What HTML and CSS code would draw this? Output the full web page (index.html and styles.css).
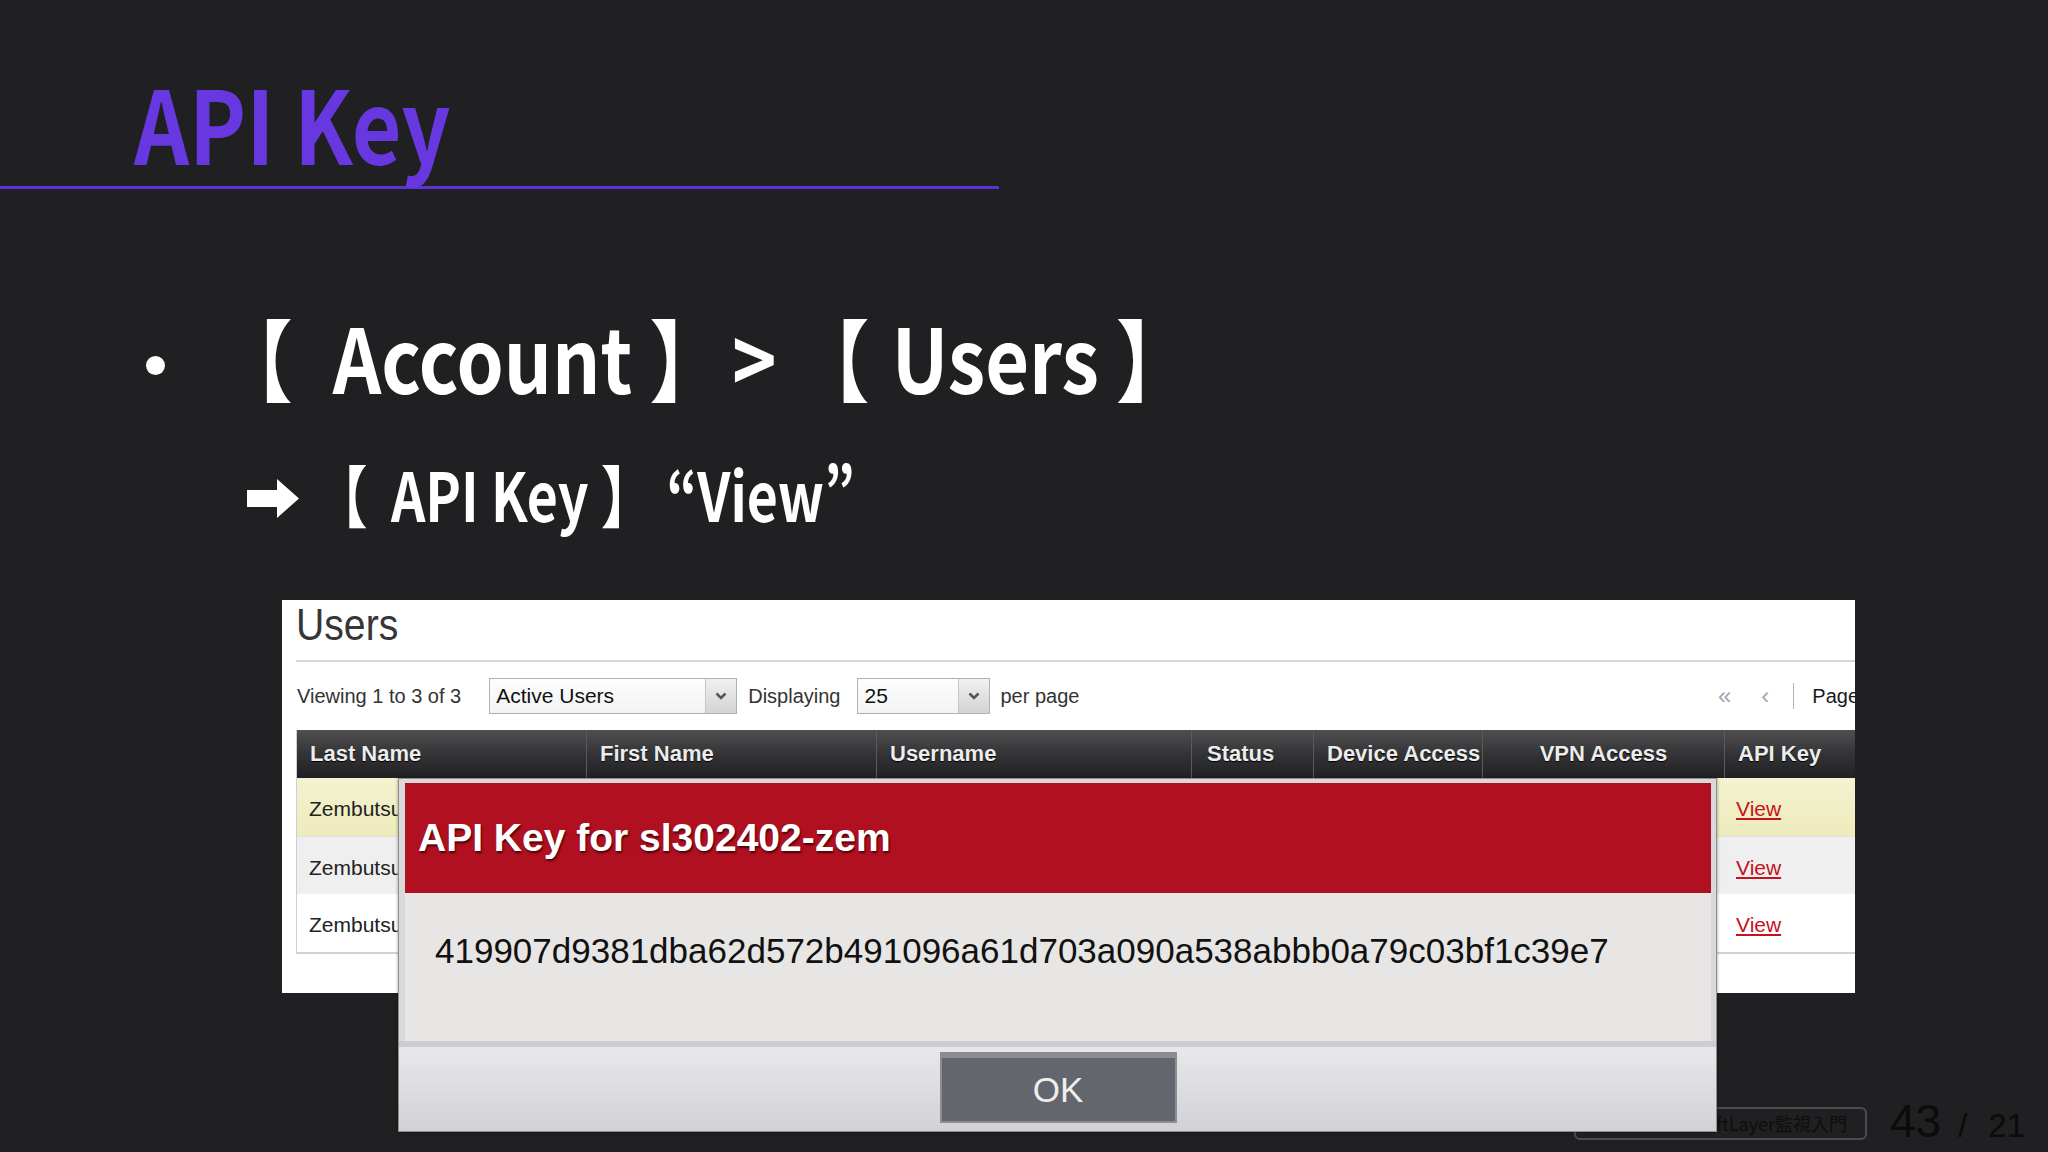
FILE: index.html
```html
<!DOCTYPE html>
<html lang="ja">
<head>
    <meta charset="UTF-8">
    <title>API Key</title>
    <link rel="stylesheet" href="styles.css">
</head>
<body>
    <div class="slide">
        <header class="slide-head">
            <h1 class="slide-title"><span class="title-text">API Key</span></h1>
        </header>

        <ul class="points">
            <li class="point point-main">
                <span class="dot"></span>
                <span class="point-text main-text">【 <i class="sp sp-lg"></i>Account 】<i class="sp sp-sm"></i>&gt; 【 <i class="sp sp-xs"></i>Users 】</span>
            </li>
            <li class="point point-sub">
                <svg class="arrow" width="53" height="39" viewBox="0 0 53 39">
                    <path d="M0 11 H30 V0 L52 19.5 L30 39 V28 H0 Z" fill="#fff"/>
                </svg>
                <span class="point-text sub-text">【 <i class="sp sp-md"></i>API Key 】 “View”</span>
            </li>
        </ul>

        <!-- portal screenshot -->
        <div class="shot">
            <div class="shot-title"><span class="users-heading">Users</span></div>

            <div class="toolbar">
                <span class="label">Viewing 1 to 3 of 3</span>
                <div class="select select-filter">
                    <span class="select-value">Active Users</span>
                    <span class="select-btn">
                        <svg width="12" height="8" viewBox="0 0 12 8"><polyline points="1.5,1.5 6,6 10.5,1.5" fill="none" stroke="#555" stroke-width="2.6"/></svg>
                    </span>
                </div>
                <span class="label label-display">Displaying</span>
                <div class="select select-count">
                    <span class="select-value">25</span>
                    <span class="select-btn">
                        <svg width="12" height="8" viewBox="0 0 12 8"><polyline points="1.5,1.5 6,6 10.5,1.5" fill="none" stroke="#555" stroke-width="2.6"/></svg>
                    </span>
                </div>
                <span class="label label-per">per page</span>

                <div class="pager">
                    <span class="pager-arrow">«</span>
                    <span class="pager-arrow pager-prev">‹</span>
                    <span class="pager-sep"></span>
                    <span class="label pager-label">Page 1 of 1</span>
                </div>
            </div>

            <div class="users">
                <div class="row row-head">
                    <div class="cell">Last Name</div>
                    <div class="cell">First Name</div>
                    <div class="cell">Username</div>
                    <div class="cell cell-status">Status</div>
                    <div class="cell">Device Access</div>
                    <div class="cell cell-center">VPN Access</div>
                    <div class="cell">API Key</div>
                </div>
                <div class="row row-hover">
                    <div class="cell">Zembutsu</div>
                    <div class="cell"></div>
                    <div class="cell"></div>
                    <div class="cell"></div>
                    <div class="cell"></div>
                    <div class="cell"></div>
                    <div class="cell"><a class="view-link" href="#">View</a></div>
                </div>
                <div class="row row-alt">
                    <div class="cell">Zembutsu</div>
                    <div class="cell"></div>
                    <div class="cell"></div>
                    <div class="cell"></div>
                    <div class="cell"></div>
                    <div class="cell"></div>
                    <div class="cell"><a class="view-link" href="#">View</a></div>
                </div>
                <div class="row">
                    <div class="cell">Zembutsu</div>
                    <div class="cell"></div>
                    <div class="cell"></div>
                    <div class="cell"></div>
                    <div class="cell"></div>
                    <div class="cell"></div>
                    <div class="cell"><a class="view-link" href="#">View</a></div>
                </div>
            </div>
        </div>

        <!-- API key dialog -->
        <div class="modal">
            <div class="modal-head">
                <h2 class="modal-title">API Key for sl302402-zem</h2>
            </div>
            <div class="modal-body">
                <p class="api-key">419907d9381dba62d572b491096a61d703a090a538abbb0a79c03bf1c39e7</p>
            </div>
            <div class="modal-foot">
                <button class="ok-btn">OK</button>
            </div>
        </div>

        <footer class="slide-foot">
            <span class="deck-name">はじめてのSoftLayer監視入門</span>
            <span class="page-num">
                <span class="page-cur">43</span>
                <span class="page-sep">/</span>
                <span class="page-total">21</span>
            </span>
        </footer>
    </div>
</body>
</html>
```

FILE: styles.css
```css
* {
    box-sizing: border-box;
}

body {
    margin: 0;
    background: #201f21;
    font-family: "Noto Sans CJK JP", "Noto Sans", sans-serif;
    color: #fff;
}

.slide {
    width: 2048px;
    height: 1152px;
    position: relative;
    overflow: hidden;
}

/* 标题 */
.slide-head {
    width: 999px;
    height: 189px;
    border-bottom: 3px solid #5b35d3;
    padding-left: 134px;
    display: flex;
    align-items: flex-end;
}

.slide-title {
    margin: 0 0 14px;
    font-size: 101px;
    line-height: 1;
    font-weight: 700;
    color: #6737df;
}

.title-text {
    display: inline-block;
    transform: scaleX(.85);
    transform-origin: left center;
}

/* 要点 */
.points {
    list-style: none;
    margin: 122px 0 0;
    padding: 0;
}

.point {
    display: flex;
    line-height: 1;
    font-weight: 700;
}

.point-text {
    display: inline-block;
    white-space: pre;
    transform-origin: left center;
    transform: scaleX(.85);
}

.sub-text {
    transform: scaleX(.8);
}

.sp {
    display: inline-block;
}

.sp-lg {
    width: 27px;
}

.sp-sm {
    width: 8px;
}

.sp-xs {
    width: 6px;
}

.sp-md {
    width: 14px;
}

.point-main {
    font-size: 89px;
    height: 89px;
    padding-left: 146px;
}

.dot {
    width: 19px;
    height: 19px;
    border-radius: 50%;
    background: #fff;
    margin-top: 45px;
    margin-right: 52px;
    flex: none;
}

.point-sub {
    font-size: 67px;
    height: 67px;
    margin-top: 59px;
    padding-left: 247px;
}

.arrow {
    flex: none;
    margin-top: 20px;
    margin-right: 14px;
}

/* 截图 */
.shot {
    margin: 74px 0 0 282px;
    width: 1573px;
    height: 393px;
    background: #fff;
    overflow: hidden;
    padding-left: 14px;
    font-family: "Liberation Sans", Arial, sans-serif;
    color: #333;
}

.shot-title {
    height: 62px;
    padding-top: 3px;
    border-bottom: 2px solid #d6d6d6;
    font-size: 44px;
    line-height: 1;
}

.users-heading {
    display: inline-block;
    transform: scaleX(.89);
    transform-origin: left center;
    color: #363636;
}

.toolbar {
    width: 1622px;
    height: 68px;
    display: flex;
    align-items: center;
    font-size: 20px;
}

.label {
    color: #333;
    white-space: nowrap;
    padding-left: 1px;
}

.select {
    height: 36px;
    display: flex;
    border: 1px solid #afb1b4;
    background: linear-gradient(#fdfdfd, #f3f3f3);
}

.select-filter {
    width: 248px;
    margin-left: 28px;
}

.select-count {
    width: 133px;
    margin-left: 17px;
}

.select-value {
    flex: 1;
    padding-left: 6px;
    line-height: 34px;
    color: #111;
    font-size: 21px;
}

.select-btn {
    width: 31px;
    border-left: 1px solid #c6c6c6;
    background: linear-gradient(#f1f1f1, #d3d3d3);
    display: flex;
    align-items: center;
    justify-content: center;
}

.label-display {
    margin-left: 10px;
}

.label-per {
    margin-left: 9px;
}

.pager {
    margin-left: auto;
    width: 200px;
    display: flex;
    align-items: center;
}

.pager-arrow {
    color: #a3a4b3;
    font-size: 24px;
}

.pager-prev {
    margin-left: 30px;
}

.pager-sep {
    width: 1px;
    height: 26px;
    background: #b5b5b5;
    margin-left: 24px;
}

.pager-label {
    margin-left: 17px;
    color: #1a1a1a;
}

/* 表格 */
.users {
    width: max-content;
    border-left: 1px solid #cfcfcf;
    border-bottom: 2px solid #d2d2d2;
}

.row {
    display: grid;
    grid-template-columns: 289px 290px 315px 122px 169px 242px 180px;
    height: 58px;
    font-size: 21px;
    color: #222;
}

.row .cell {
    padding: 4px 0 0 12px;
    line-height: 54px;
    white-space: nowrap;
    overflow: hidden;
}

.row-head {
    height: 48px;
    background: linear-gradient(#4f4f51, #343436 50%, #202022);
    font-size: 22px;
    font-weight: 700;
    color: #ececec;
}

.row-head .cell {
    padding: 0 0 0 13px;
    line-height: 48px;
    text-shadow: 0 1px 1px #000;
}

.row-head .cell + .cell {
    border-left: 1px solid #5a5a5c;
}

.row-head .cell-status {
    padding-left: 15px;
}

.row-head .cell-center {
    padding-left: 0;
    text-align: center;
}

.row-hover {
    background: linear-gradient(#f4f2d0, #eeebbb);
}

.row-alt {
    background: #efefef;
    border-top: 1px solid #e2e2e2;
}

.view-link {
    color: #c4121f;
    text-decoration: underline;
}

/* 弹窗 */
.modal {
    position: absolute;
    left: 398px;
    top: 778px;
    width: 1319px;
    height: 354px;
    border: 1px solid #8f8f8f;
    background: #d9d9db;
    padding: 4px 5px 0 6px;
    display: flex;
    flex-direction: column;
    z-index: 2;
    font-family: "Liberation Sans", Arial, sans-serif;
    box-shadow: 0 0 3px rgba(0, 0, 0, 0.4);
}

.modal-head {
    height: 110px;
    background: #b01020;
    padding-left: 13px;
}

.modal-title {
    margin: 0;
    font-size: 39px;
    line-height: 110px;
    font-weight: 700;
    color: #fff;
    text-shadow: 1px 2px 2px rgba(50, 0, 0, 0.8);
}

.modal-body {
    height: 148px;
    background: #e7e6e4;
    padding: 40px 0 0 30px;
}

.api-key {
    margin: 0;
    font-size: 35px;
    line-height: 1;
    color: #111;
}

.modal-foot {
    flex: 1;
    border-top: 6px solid #cdccd0;
    background: linear-gradient(#e8e7ea, #d2d1d5);
    display: flex;
    justify-content: center;
    padding-top: 5px;
    margin: 0 -5px 0 -6px;
    padding-left: 1px;
}

.ok-btn {
    width: 237px;
    height: 71px;
    border: 2px solid #8c8d92;
    border-top-width: 6px;
    background: #63666d;
    color: #eee;
    font-family: "Liberation Sans", Arial, sans-serif;
    font-size: 35px;
    padding: 0;
}

/* 页脚 */
.slide-foot {
    position: absolute;
    right: 26px;
    bottom: 12px;
    display: flex;
    align-items: flex-end;
    gap: 23px;
}

.deck-name {
    width: 293px;
    height: 33px;
    border: 2px solid #4c4c4e;
    border-radius: 6px;
    text-align: right;
    padding-right: 18px;
    font-size: 18px;
    line-height: 29px;
    color: #0e0e0e;
    white-space: nowrap;
    overflow: hidden;
}

.page-num {
    display: flex;
    align-items: baseline;
    width: 132px;
    margin-bottom: -4px;
    font-family: "Liberation Sans", Arial, sans-serif;
    line-height: 1;
    color: #0b0b0b;
}

.page-cur {
    font-size: 46px;
}

.page-sep {
    font-size: 33px;
    margin-left: 17px;
}

.page-total {
    font-size: 33px;
    margin-left: 21px;
}
```
